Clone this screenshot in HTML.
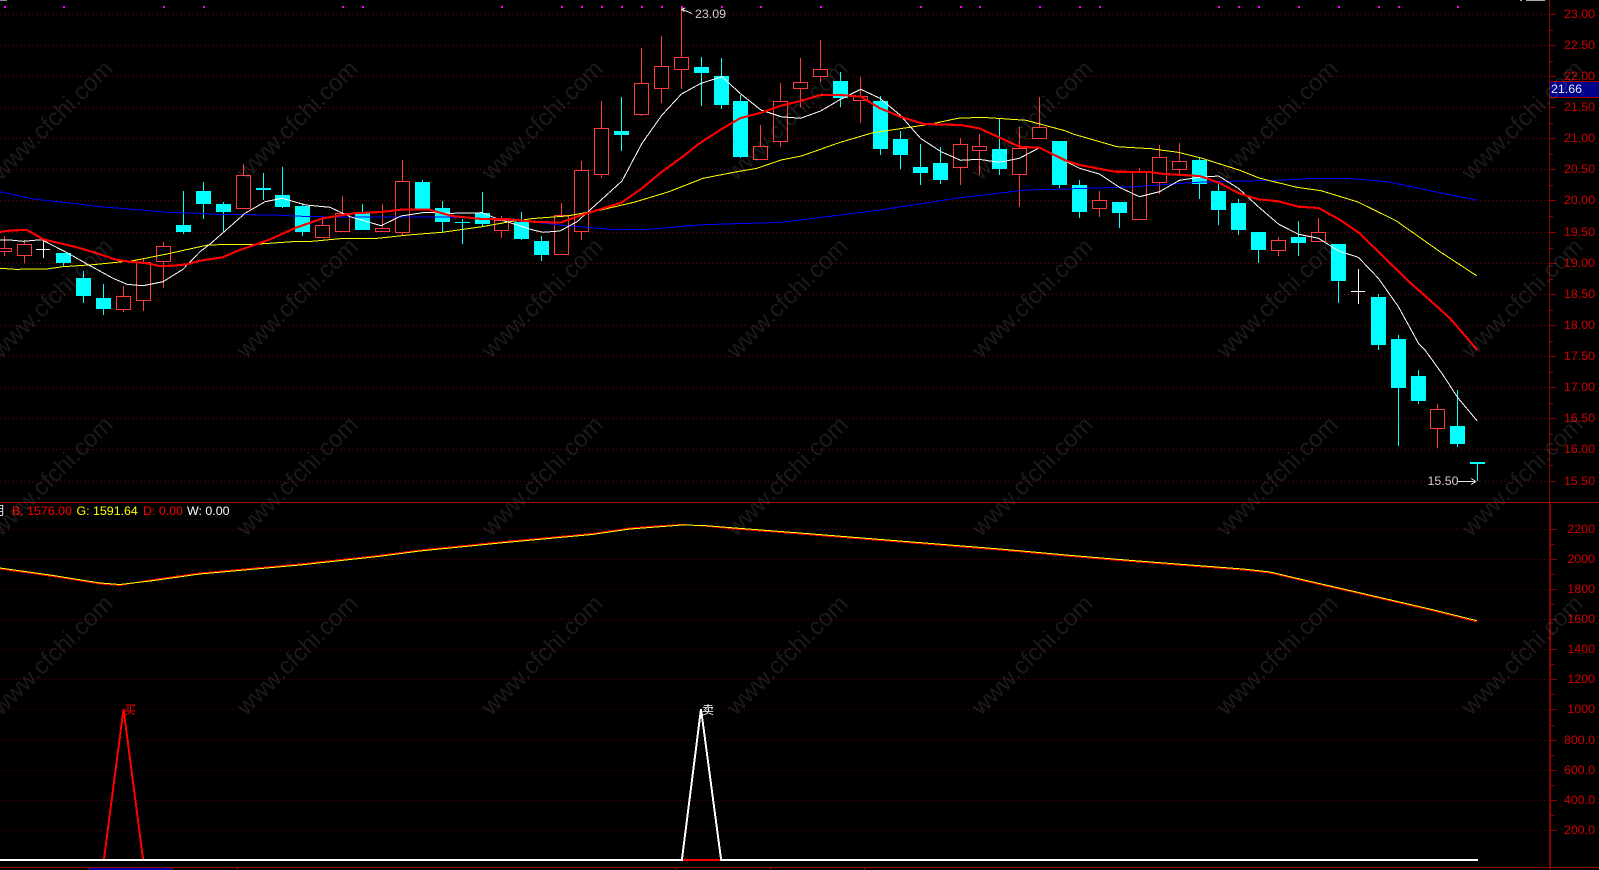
<!DOCTYPE html>
<html><head><meta charset="utf-8"><title>K</title>
<style>html,body{margin:0;padding:0;background:#000;width:1599px;height:870px;overflow:hidden}svg{display:block}text{font-family:"Liberation Sans","Noto Sans CJK SC",sans-serif;font-size:12.4px}.w{font-size:24px}</style></head>
<body>
<svg xmlns="http://www.w3.org/2000/svg" width="1599" height="870" viewBox="0 0 1599 870">
<rect width="1599" height="870" fill="#000"/>
<g stroke="#7c0000" stroke-dasharray="1 3" shape-rendering="crispEdges" fill="none">
<path d="M0 14.5H1549M0 45.5H1549M0 76.5H1549M0 107.5H1549M0 138.5H1549M0 169.5H1549M0 200.5H1549M0 232.5H1549M0 263.5H1549M0 294.5H1549M0 325.5H1549M0 356.5H1549M0 387.5H1549M0 418.5H1549M0 449.5H1549M0 481.5H1549"/>
<path stroke="#5c0000" d="M0 529.5H1549M0 559.5H1549M0 589.5H1549M0 619.5H1549M0 649.5H1549M0 679.5H1549M0 709.5H1549M0 740.5H1549M0 770.5H1549M0 800.5H1549M0 830.5H1549"/>
</g>
<g shape-rendering="crispEdges">
<path fill="none" stroke="#0ff" d="M63.5 253V266M83.5 271V303M103.5 284V315M183.5 191V234M203.5 182V219M223.5 202V232M263.5 173V200M282.5 167V208M302.5 204V236M362.5 204V230M422.5 180V210M442.5 201V232M462.5 219V244M482.5 192V226M521.5 212V240M541.5 236V261M621.5 97V151M701.5 57V106M721.5 58V109M740.5 95V158M840.5 72V107M880.5 96V155M900.5 131V169M920.5 144V185M940.5 147V184M999.5 118V175M1059.5 141V188M1079.5 180V218M1119.5 202V228M1199.5 158V199M1218.5 184V225M1238.5 199V235M1258.5 232V263M1298.5 221V256M1338.5 244V303M1378.5 294V350M1398.5 335V446M1418.5 370V404M1457.5 390V447M1477.5 462V481"/>
<path fill="#0ff" d="M56 253h15v10h-15zM76 278h15v18h-15zM96 298h15v11h-15zM176 225h15v7h-15zM196 191h15v13h-15zM216 204h15v8h-15zM256 188h15v2h-15zM275 195h15v12h-15zM295 206h15v26h-15zM355 213h15v17h-15zM415 182h15v28h-15zM435 208h15v14h-15zM455 222h15v1h-15zM475 213h15v11h-15zM514 222h15v17h-15zM534 241h15v14h-15zM614 131h15v4h-15zM694 67h15v6h-15zM714 76h15v29h-15zM733 101h15v56h-15zM833 81h15v17h-15zM873 101h15v48h-15zM893 139h15v16h-15zM913 167h15v6h-15zM933 163h15v17h-15zM992 149h15v20h-15zM1052 141h15v44h-15zM1072 185h15v27h-15zM1112 202h15v11h-15zM1192 160h15v24h-15zM1211 191h15v19h-15zM1231 203h15v27h-15zM1251 232h15v18h-15zM1291 237h15v6h-15zM1331 244h15v37h-15zM1371 297h15v48h-15zM1391 339h15v49h-15zM1411 376h15v25h-15zM1450 426h15v18h-15zM1470 462h15v2h-15z"/>
<path fill="none" stroke="#ff3c3c" d="M4.5 236V256M24.5 240V263M123.5 286V312M143.5 258V311M163.5 242V288M243.5 164V209M322.5 216V238M342.5 196V232M382.5 204V232M402.5 160V235M501.5 216V238M561.5 203V255M581.5 161V240M601.5 101V178M641.5 48V116M661.5 36V103M681.5 7V89M760.5 125V160M780.5 83V147M800.5 58V107M820.5 40V82M860.5 77V123M960.5 138V185M979.5 134V175M1019.5 127V207M1039.5 97V139M1099.5 191V217M1139.5 168V220M1159.5 145V194M1179.5 143V174M1278.5 237V256M1318.5 218V242M1437.5 404V448"/>
<path fill="#000" stroke="#ff3c3c" d="M-2.5 248.5h14v3h-14zM17.5 244.5h14v11h-14zM116.5 296.5h14v13h-14zM136.5 262.5h14v38h-14zM156.5 246.5h14v15h-14zM236.5 175.5h14v33h-14zM315.5 225.5h14v12h-14zM335.5 213.5h14v18h-14zM375.5 228.5h14v3h-14zM395.5 181.5h14v51h-14zM494.5 220.5h14v10h-14zM554.5 215.5h14v39h-14zM574.5 170.5h14v61h-14zM594.5 128.5h14v46h-14zM634.5 83.5h14v31h-14zM654.5 66.5h14v22h-14zM674.5 57.5h14v12h-14zM753.5 146.5h14v13h-14zM773.5 101.5h14v40h-14zM793.5 82.5h14v6h-14zM813.5 69.5h14v7h-14zM853.5 96.5h14v4h-14zM953.5 144.5h14v23h-14zM972.5 146.5h14v4h-14zM1012.5 148.5h14v26h-14zM1032.5 127.5h14v11h-14zM1092.5 200.5h14v8h-14zM1132.5 172.5h14v47h-14zM1152.5 157.5h14v25h-14zM1172.5 161.5h14v8h-14zM1271.5 240.5h14v10h-14zM1311.5 232.5h14v9h-14zM1430.5 409.5h14v19h-14z"/>
<path fill="none" stroke="#fff" d="M43.5 240V258M36 249.5H50M1358.5 269V304M1351 291.5H1365"/>
<path fill="#f0f" d="M4 6h2v2H4zM63 6h2v2h-2zM163 6h2v2h-2zM203 6h2v2h-2zM342 6h2v2h-2zM362 6h2v2h-2zM501 6h2v2h-2zM561 6h2v2h-2zM581 6h2v2h-2zM601 6h2v2h-2zM621 6h2v2h-2zM641 6h2v2h-2zM661 6h2v2h-2zM681 6h2v2h-2zM721 6h2v2h-2zM760 6h2v2h-2zM820 6h2v2h-2zM920 6h2v2h-2zM960 6h2v2h-2zM979 6h2v2h-2zM1039 6h2v2h-2zM1079 6h2v2h-2zM1099 6h2v2h-2zM1218 6h2v2h-2zM1238 6h2v2h-2zM1258 6h2v2h-2zM1298 6h2v2h-2zM1338 6h2v2h-2zM1378 6h2v2h-2zM1398 6h2v2h-2zM1457 6h2v2h-2z"/>
<polyline fill="none" stroke="#0000ff" stroke-width="1" points="0,191.7 33,199 67,202.7 100,206.7 133,209.3 167,212.3 200,213.3 214,214.3 272,215 312,216.7 374,217 442,217 482,218.3 533,222 567,225.7 611,229.3 648.6,229.3 703,224.7 781,222.3 873,211 958,198 1026,190 1066,189 1134,186.7 1202,182 1287,180 1311,178.3 1348,178.3 1389,182 1440,192.7 1477,200.3"/>
<polyline fill="none" stroke="#ffff00" stroke-width="1" points="0,268.3 15,269.3 47,269 63,266.7 93,264.7 133,260.7 167,254 200,246.7 208,245 234.5,244.3 255,244.3 292,241.7 312,241.3 340,238.7 374,238.7 408,235 442,232.3 482,226.7 510,221.7 533,218.5 567,216 601,210 635,202 669,191.7 703,178.3 737,171.7 757,168.3 781,160 801.5,156 839,142.7 873,132.7 907,127.7 931,124 958,118.3 982,117.3 1026,120.3 1066,131 1073,134 1117,146.7 1151,148.7 1178,152.3 1202,158.3 1239,170 1260,178.3 1297,187.3 1321,190.7 1358,202 1396,220.7 1440,251.7 1476.6,275.7"/>
<polyline fill="none" stroke="#fff" stroke-width="1" points="0,240 10,240 23,241.3 41.7,239.7 67,252.7 87,264 113,278.3 127,284.3 143,285.7 163,281.7 183,269.3 200,251.7 211,243.3 245,213.3 265,201.7 282,198.3 306,205 330,207.3 350,216.7 381,225.7 401,216 425,212.3 452,213.3 482,212.7 496,218.3 533,230 543,232.3 560,231 577,221.7 601,200 622,181 642,143.3 662,115 681.5,94 701,83.3 722,76.7 740,93.3 761,110 781,116.7 800.5,118.3 820.6,111 840.6,99.3 860.7,89.3 880,98.3 900,115 920.5,138.3 941,151.7 960.6,160.3 979,159.3 999,162.3 1019.4,158.3 1039.5,147.7 1059.5,158.3 1079.6,168.3 1099.3,174 1119.4,187.3 1139.4,196.7 1159.5,191.7 1179.5,180.3 1199.6,177.3 1218.6,176 1238.3,188.3 1258.4,206.7 1278.4,224 1298.5,234.3 1318.5,238.3 1338.6,251 1358.3,257.3 1378.4,278.3 1398.4,306.7 1418.5,343.3 1425,350 1443,375 1458,398 1477,420.7"/>
<polyline fill="none" stroke="#ff0000" stroke-width="2.1" points="0,232.3 5,231 15,230.3 26.7,230 33,233.3 43,239.3 77,247.3 97,253.3 117,260 130,261.7 147,263.3 160,266 173,265.7 187,264.3 200,260.7 222.6,257.3 238,250.7 268.5,240 296,227.7 323,218.3 353.5,213.3 381,212 404.5,209.3 428,209.3 452,216 482,219 510,219.3 533,221.7 560,222.7 581.6,215 621.4,202.7 642,188.3 662,171.7 682.6,156.7 699.6,143.3 720,130 740,118.3 761,112.7 781,105.7 800.5,101 820.6,95 840.6,95 860.7,96.7 880,108.3 900.4,116.7 924,124 960.6,125 979,128.3 999,137.3 1019.4,146.7 1039.5,147.7 1066,160.7 1079.6,165 1115,171.7 1149,172 1164.6,174 1199.6,176 1219,182.7 1239,193.3 1258.4,199.3 1278.4,201.3 1298.5,206.7 1318.5,208 1338.6,219 1358.3,232.3 1378.4,251.7 1409,281.7 1429.7,300 1450,318.3 1477.3,350"/>
<polyline fill="none" stroke="#ff0000" stroke-width="1" points="0,569 50,576 100,584 120,585.5 150,580 200,573 300,564 378,555.5 420,550 500,542 592,533.5 630,528 663,525.5 682,524.5 704,526 735,529 800,534 900,542 1000,550 1066,556 1117,560.3 1168,564.3 1243,570 1270,573 1304,581 1355,592.7 1431,610.3 1477,622"/>
<polyline fill="none" stroke="#ffff00" stroke-width="1" points="0,568 50,575 100,583 120,584.5 150,581 200,574 300,565 378,556.5 420,551 500,543 592,534.5 630,529 663,526.5 682,525 704,525.5 735,528 800,533 900,541 1000,549 1066,555 1117,559.3 1168,563.3 1243,569 1270,572 1304,580 1355,591.7 1431,609.3 1477,620.7"/>
<polyline fill="none" stroke="#ff0000" stroke-width="2" points="104,859 123.5,709 143,859"/>
<polyline fill="none" stroke="#fff" stroke-width="2" points="682,859 701,709 721,859"/>
<rect x="0" y="859" width="1478" height="2" fill="#fff"/>
<rect x="683" y="859" width="37" height="2" fill="#f00"/>
<rect x="0" y="502" width="1599" height="1" fill="#a00000"/>
<rect x="1549" y="0" width="1" height="502" fill="#8b0000"/>
<rect x="1549" y="502" width="2" height="365" fill="#8b0000"/>
<rect x="0" y="867" width="1599" height="1" fill="#8b0000"/>
<path stroke="#8b0000" fill="none" d="M1550 14.5h6M1550 45.5h6M1550 76.5h6M1550 107.5h6M1550 138.5h6M1550 169.5h6M1550 200.5h6M1550 232.5h6M1550 263.5h6M1550 294.5h6M1550 325.5h6M1550 356.5h6M1550 387.5h6M1550 418.5h6M1550 449.5h6M1550 481.5h6M1550 30.5h3M1550 61.5h3M1550 123.5h3M1550 154.5h3M1550 185.5h3M1550 216.5h3M1550 248.5h3M1550 279.5h3M1550 310.5h3M1550 341.5h3M1550 372.5h3M1550 403.5h3M1550 434.5h3M1550 465.5h3M1551 529.5h6M1551 559.5h6M1551 589.5h6M1551 619.5h6M1551 649.5h6M1551 679.5h6M1551 709.5h6M1551 740.5h6M1551 770.5h6M1551 800.5h6M1551 830.5h6M1551 544.5h3M1551 574.5h3M1551 604.5h3M1551 634.5h3M1551 664.5h3M1551 694.5h3M1551 725.5h3M1551 755.5h3M1551 785.5h3M1551 815.5h3M88.5 868v2M172.5 868v2M237.5 868v2M675.5 868v2M770.5 868v2M864.5 868v2M1550.5 868v2"/>
<rect x="89" y="868" width="83" height="2" fill="#0000a0"/>
<rect x="1550" y="81" width="49" height="17" fill="#000088"/>
<path stroke="#a00000" d="M1550 81.5H1599M1550 97.5H1599"/>
<rect x="1526" y="0" width="19" height="1" fill="#aaa"/>
<rect x="1520" y="0" width="2" height="1" fill="#aaa"/>
<rect x="0" y="0" width="7" height="1" fill="#888"/>
<path fill="none" stroke="#e0e0e0" d="M681.5 9L692 13.5M681.5 9l4-1M681.5 9l3 3M1457 481.5H1476M1476 481.5l-5-3M1476 481.5l-5 3"/>
</g>
<g fill="#d00000" text-anchor="end">
<text x="1595" y="18">23.00</text><text x="1595" y="49">22.50</text><text x="1595" y="80">22.00</text><text x="1595" y="111">21.50</text><text x="1595" y="142">21.00</text><text x="1595" y="173">20.50</text><text x="1595" y="204">20.00</text><text x="1595" y="236">19.50</text><text x="1595" y="267">19.00</text><text x="1595" y="298">18.50</text><text x="1595" y="329">18.00</text><text x="1595" y="360">17.50</text><text x="1595" y="391">17.00</text><text x="1595" y="422">16.50</text><text x="1595" y="453">16.00</text><text x="1595" y="485">15.50</text>
<text x="1595" y="533">2200</text><text x="1595" y="563">2000</text><text x="1595" y="593">1800</text><text x="1595" y="623">1600</text><text x="1595" y="653">1400</text><text x="1595" y="683">1200</text><text x="1595" y="713">1000</text><text x="1595" y="744">800.0</text><text x="1595" y="774">600.0</text><text x="1595" y="804">400.0</text><text x="1595" y="834">200.0</text>
</g>
<text x="1551" y="93" fill="#e8e8ff">21.66</text>
<text x="695" y="18" fill="#d0d0d0">23.09</text>
<text x="1427.5" y="485" fill="#d0d0d0">15.50</text>
<text x="-7" y="515" fill="#e0e0e0">月</text>
<text x="12" y="515" fill="#ff0000">B: 1576.00</text>
<text x="76.5" y="515" fill="#ffff00">G: 1591.64</text>
<text x="143" y="515" fill="#ff0000">D: 0.00</text>
<text x="187" y="515" fill="#ffffff">W: 0.00</text>
<text x="124" y="714" fill="#ff0000" style="font-size:12px;font-family:'Noto Sans CJK SC',sans-serif">买</text>
<text x="702" y="714" fill="#ffffff" style="font-size:12px;font-family:'Noto Sans CJK SC',sans-serif">卖</text>
<g fill="#fff" fill-opacity=".1" text-anchor="middle">
<text class="w" transform="translate(52 120) rotate(-44.5)" y="8">www.cfchi.com</text><text class="w" transform="translate(297 120) rotate(-44.5)" y="8">www.cfchi.com</text><text class="w" transform="translate(542 120) rotate(-44.5)" y="8">www.cfchi.com</text><text class="w" transform="translate(787 120) rotate(-44.5)" y="8">www.cfchi.com</text><text class="w" transform="translate(1032 120) rotate(-44.5)" y="8">www.cfchi.com</text><text class="w" transform="translate(1277 120) rotate(-44.5)" y="8">www.cfchi.com</text><text class="w" transform="translate(1522 120) rotate(-44.5)" y="8">www.cfchi.com</text>
<text class="w" transform="translate(52 298) rotate(-44.5)" y="8">www.cfchi.com</text><text class="w" transform="translate(297 298) rotate(-44.5)" y="8">www.cfchi.com</text><text class="w" transform="translate(542 298) rotate(-44.5)" y="8">www.cfchi.com</text><text class="w" transform="translate(787 298) rotate(-44.5)" y="8">www.cfchi.com</text><text class="w" transform="translate(1032 298) rotate(-44.5)" y="8">www.cfchi.com</text><text class="w" transform="translate(1277 298) rotate(-44.5)" y="8">www.cfchi.com</text><text class="w" transform="translate(1522 298) rotate(-44.5)" y="8">www.cfchi.com</text>
<text class="w" transform="translate(52 476) rotate(-44.5)" y="8">www.cfchi.com</text><text class="w" transform="translate(297 476) rotate(-44.5)" y="8">www.cfchi.com</text><text class="w" transform="translate(542 476) rotate(-44.5)" y="8">www.cfchi.com</text><text class="w" transform="translate(787 476) rotate(-44.5)" y="8">www.cfchi.com</text><text class="w" transform="translate(1032 476) rotate(-44.5)" y="8">www.cfchi.com</text><text class="w" transform="translate(1277 476) rotate(-44.5)" y="8">www.cfchi.com</text><text class="w" transform="translate(1522 476) rotate(-44.5)" y="8">www.cfchi.com</text>
<text class="w" transform="translate(52 655) rotate(-44.5)" y="8">www.cfchi.com</text><text class="w" transform="translate(297 655) rotate(-44.5)" y="8">www.cfchi.com</text><text class="w" transform="translate(542 655) rotate(-44.5)" y="8">www.cfchi.com</text><text class="w" transform="translate(787 655) rotate(-44.5)" y="8">www.cfchi.com</text><text class="w" transform="translate(1032 655) rotate(-44.5)" y="8">www.cfchi.com</text><text class="w" transform="translate(1277 655) rotate(-44.5)" y="8">www.cfchi.com</text><text class="w" transform="translate(1522 655) rotate(-44.5)" y="8">www.cfchi.com</text>
</g>
</svg>
</body></html>
